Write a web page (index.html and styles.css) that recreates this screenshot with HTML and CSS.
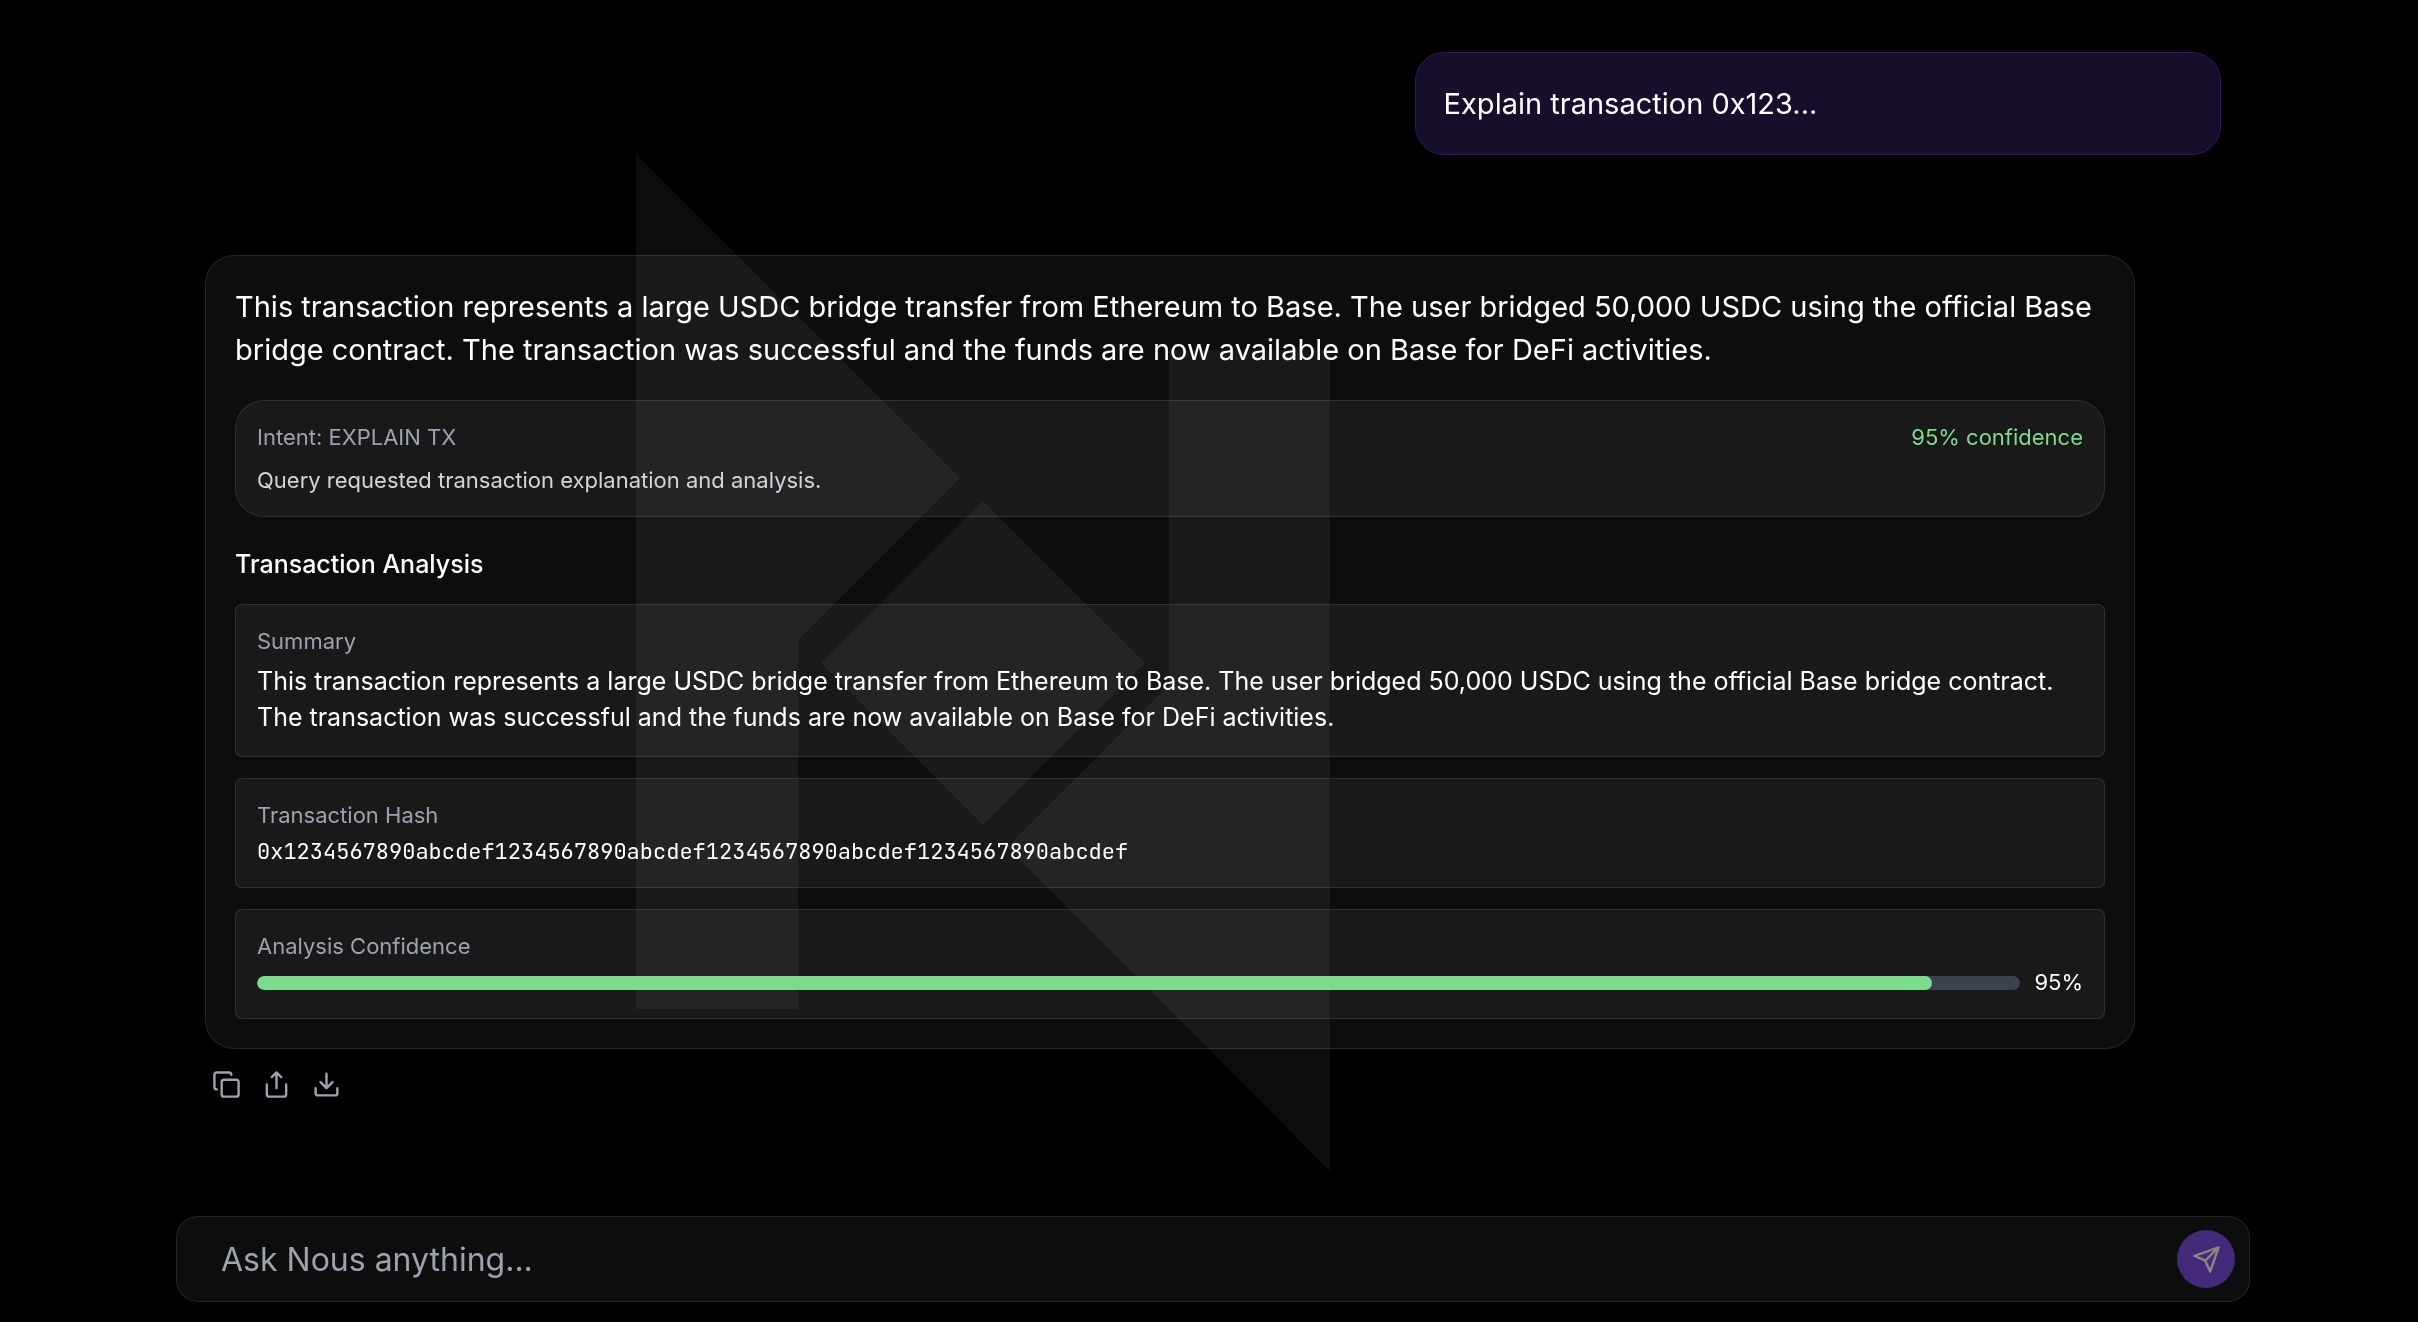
FILE: index.html
```html
<!DOCTYPE html>
<html lang="en">
<head>
<meta charset="utf-8">
<meta name="viewport" content="width=device-width, initial-scale=1">
<title>Nous</title>
<link rel="stylesheet" href="styles.css">
</head>
<body>
<svg class="watermark" viewBox="0 0 694 1017" aria-hidden="true">
  <path d="M0 0 324 324 162 486V855H0z"/>
  <path d="M347 347 509 509 347 671 185 509z"/>
  <path d="M694 1017V196H533V531L371 693z"/>
</svg>
<main class="chat">
  <section class="thread">
    <div class="bubble">Explain transaction 0x123...</div>
    <article class="answer">
      <div class="card">
        <p class="lead">This transaction represents a large USDC bridge transfer from Ethereum to Base. The user bridged 50,000 USDC using the official Base bridge contract. The transaction was successful and the funds are now available on Base for DeFi activities.</p>
        <section class="intent">
          <div class="intent-head">
            <span class="label">Intent: EXPLAIN TX</span>
            <span class="score">95% confidence</span>
          </div>
          <p class="note">Query requested transaction explanation and analysis.</p>
        </section>
        <h2 class="title">Transaction Analysis</h2>
        <div class="panels">
          <section class="panel">
            <h3 class="label">Summary</h3>
            <p class="summary">This transaction represents a large USDC bridge transfer from Ethereum to Base. The user bridged 50,000 USDC using the official Base bridge contract. The transaction was successful and the funds are now available on Base for DeFi activities.</p>
          </section>
          <section class="panel">
            <h3 class="label">Transaction Hash</h3>
            <code class="hash">0x1234567890abcdef1234567890abcdef1234567890abcdef1234567890abcdef</code>
          </section>
          <section class="panel">
            <h3 class="label">Analysis Confidence</h3>
            <div class="meter">
              <div class="track"><div class="fill" style="width: 95%"></div></div>
              <span class="percent">95%</span>
            </div>
          </section>
        </div>
      </div>
      <div class="actions">
        <button class="action" type="button" aria-label="Copy"><svg class="icon" viewBox="0 0 24 24"><rect x="8" y="8" width="14" height="14" rx="2"/><path d="M4 16c-1.1 0-2-.9-2-2V4c0-1.1.9-2 2-2h10c1.1 0 2 .9 2 2"/></svg></button>
        <button class="action" type="button" aria-label="Share"><svg class="icon" viewBox="0 0 24 24"><path d="M4 12v8a2 2 0 0 0 2 2h12a2 2 0 0 0 2-2v-8M16 6l-4-4-4 4M12 2v13"/></svg></button>
        <button class="action" type="button" aria-label="Download"><svg class="icon" viewBox="0 0 24 24"><path d="M21 15v4a2 2 0 0 1-2 2H5a2 2 0 0 1-2-2v-4M7 10l5 5 5-5M12 15V3"/></svg></button>
      </div>
    </article>
  </section>
  <form class="composer">
    <input class="prompt" type="text" placeholder="Ask Nous anything..." aria-label="Ask Nous anything">
    <button class="send" type="button" aria-label="Send"><svg class="icon" viewBox="0 0 24 24"><path d="m22 2-7 20-4-9-9-4zM22 2 11 13"/></svg></button>
  </form>
</main>
</body>
</html>
```
FILE: styles.css
```css
* {
  box-sizing: border-box;
}

body {
  margin: 0;
  background: #000;
  color: #fff;
  font-family: Inter, "Liberation Sans", sans-serif;
  font-size: 22px;
  line-height: 29px;
}

h2,
h3,
p {
  margin: 0;
}

/* Brand mark behind the conversation */
.watermark {
  position: fixed;
  top: 154px;
  left: 636px;
  width: 694px;
  fill: #0d0d0d;
}

.chat {
  position: relative;
  min-height: 100vh;
  padding: 52px 168px 20px 176px;
  display: flex;
  flex-direction: column;
  justify-content: space-between;
}

.thread {
  display: flex;
  flex-direction: column;
  gap: 100px;
  padding: 0 29px;
}

.bubble {
  align-self: flex-end;
  width: 40%;
  padding: 29px 28px;
  border: 1px solid #2d1b5c;
  border-radius: 29px;
  background: #170e2b;
  font-size: 29px;
  line-height: 43px;
}

.answer {
  display: flex;
  flex-direction: column;
  gap: 14px;
  margin-right: 86px;
}

.card {
  padding: 29px;
  border: 1px solid rgba(255, 255, 255, 0.1);
  border-radius: 29px;
  background: rgba(255, 255, 255, 0.05);
}

.lead {
  margin-bottom: 29px;
  font-size: 29px;
  line-height: 43px;
}

.intent,
.panel {
  border: 1px solid rgba(255, 255, 255, 0.1);
  background: rgba(255, 255, 255, 0.05);
  padding: 22px 21px 21px;
}

.intent {
  display: flex;
  flex-direction: column;
  gap: 14px;
  border-radius: 29px;
}

.intent-head {
  display: flex;
  justify-content: space-between;
}

.label {
  color: #9ca3af;
  font-size: 22px;
  font-weight: 400;
}

.score {
  color: #7bdc8b;
}

.note {
  color: #d1d5db;
}

.title {
  margin: 29px 0 22px;
  font-size: 25px;
  font-weight: 500;
  line-height: 36px;
}

.panels {
  display: flex;
  flex-direction: column;
  gap: 21px;
}

.panel {
  display: flex;
  flex-direction: column;
  gap: 7px;
  border-radius: 7px;
}

.summary {
  font-size: 25px;
  line-height: 36px;
}

.hash {
  font-family: "JetBrains Mono", "Liberation Mono", monospace;
  font-size: 22px;
}

.meter {
  display: flex;
  align-items: center;
  gap: 14px;
}

.track {
  flex: 1;
  height: 14px;
  overflow: hidden;
  border-radius: 7px;
  background: #3a4150;
}

.fill {
  height: 100%;
  border-radius: 7px;
  background: #7bdc8b;
}

.actions {
  display: flex;
  gap: 7px;
}

.action {
  display: flex;
  padding: 7px;
  border: 0;
  background: none;
  color: #9ca3af;
}

.icon {
  width: 29px;
  height: 29px;
  fill: none;
  stroke: currentColor;
  stroke-width: 2;
  stroke-linecap: round;
  stroke-linejoin: round;
}

.composer {
  display: flex;
  align-items: center;
  padding: 13px 14px 13px 44px;
  border: 1px solid rgba(255, 255, 255, 0.1);
  border-radius: 22px;
  background: #0d0d0d;
}

.prompt {
  flex: 1;
  min-width: 0;
  padding: 0;
  border: 0;
  outline: 0;
  background: none;
  color: #fff;
  font: inherit;
  font-size: 32px;
  line-height: 43px;
}

.prompt::placeholder {
  color: #9ca3af;
  opacity: 1;
}

.send {
  display: flex;
  align-items: center;
  justify-content: center;
  width: 58px;
  height: 58px;
  padding: 0;
  border: 0;
  border-radius: 50%;
  background: #422a78;
  color: #868686;
}
```
